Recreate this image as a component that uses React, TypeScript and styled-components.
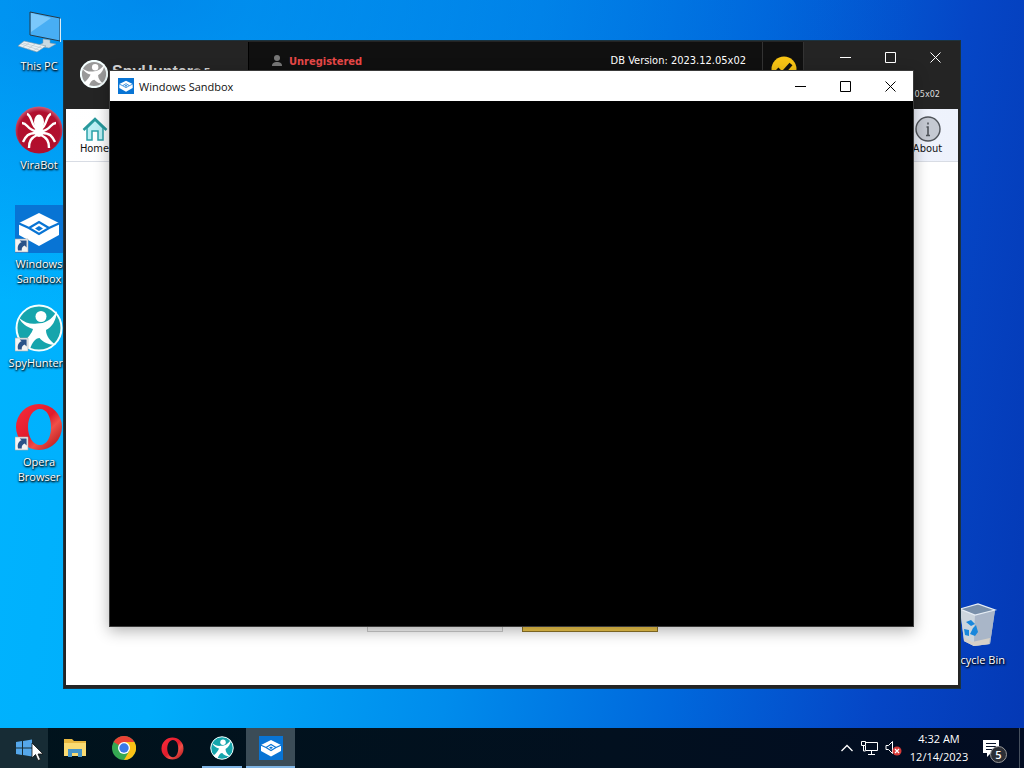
import React from "react";
import styled, { createGlobalStyle, css } from "styled-components";

const ui = `"Open Sans", "Noto Sans", sans-serif`;
const tahoma = `"DejaVu Sans Condensed", "DejaVu Sans", sans-serif`;

const Global = createGlobalStyle`
  * { box-sizing: border-box; }
  body { margin: 0; font-family: ${ui}; font-size: 11px; line-height: 15px; overflow: hidden; }
  button { font: inherit; color: inherit; border: 0; padding: 0; margin: 0; background: none; cursor: default; }
  svg { display: block; flex: none; }
  h1, h2, p { margin: 0; font: inherit; }
`;

const Desktop = styled.div`
  min-height: 100vh;
  display: flex;
  flex-direction: column;
  background:
    radial-gradient(ellipse 75% 40% at 15% 0%, rgba(0, 100, 220, 0.5), transparent),
    linear-gradient(98deg, #00b4ff 0%, #00aefb 22%, #008cec 48%, #0068dc 68%, #0546c6 86%, #0438b4 100%);
`;

const Workspace = styled.main`
  position: relative;
  flex: 1;
  padding: 7px 0;
`;

const Shortcuts = styled.nav`
  display: flex;
  flex-direction: column;
  gap: 21px;
  width: 78px;
`;

const Shortcut = styled.button`
  display: flex;
  flex-direction: column;
  align-items: center;
  gap: 3px;
  height: 78px;
  color: #fff;
  text-shadow: 1px 1px 2px #000, 0 1px 2px #000;
`;

const Label = styled.span<{ $wide?: boolean }>`
  max-width: ${(p) => (p.$wide ? "80px" : "60px")};
  text-align: center;
  white-space: ${(p) => (p.$wide ? "nowrap" : "normal")};
`;

const BinSpot = styled.div`
  position: absolute;
  right: 19px;
  bottom: 49px;
`;

const Frame = styled.section`
  position: absolute;
  left: 63px;
  right: 63px;
  top: 40px;
  bottom: 39px;
  display: flex;
  flex-direction: column;
  background: #242424;
  border: 1px solid #1b3340;
  padding: 1px 2px 3px;
`;

const FrameHeader = styled.header`
  display: flex;
  height: 67px;
  color: #fff;
  font-family: ${tahoma};
  font-size: 11px;
`;

const Brand = styled.div`
  display: flex;
  width: 182px;
  padding: 18px 0 0 14px;
  gap: 4px;
`;

const BrandName = styled.h1`
  display: flex;
  color: #d8d8d8;
  font: bold 16px/24px "Liberation Sans", sans-serif;
  white-space: nowrap;
`;

const BrandMark = styled.small`
  font-size: 11px;
`;

const StatusStrip = styled.div`
  flex: 1;
  display: flex;
  align-items: flex-start;
  justify-content: space-between;
  height: 54px;
  background: #101010;
  border-left: 1px solid #000;
  border-right: 1px solid #333;
  padding: 11px 16px 0 22px;
`;

const Unregistered = styled.span`
  display: flex;
  gap: 6px;
  color: #e84848;
  font: bold 11px/18px ${tahoma};
`;

const CheckCell = styled.div`
  width: 41px;
  height: 54px;
  padding: 14px 0 0 8px;
  background: #101010;
  border-right: 1px solid #333;
`;

const HeaderEnd = styled.div`
  display: flex;
  flex-direction: column;
  width: 154px;
`;

const Controls = styled.div<{ $dark?: boolean }>`
  display: flex;
  justify-content: flex-end;
  height: 30px;
  color: ${(p) => (p.$dark ? "#000" : "#fff")};
`;

const Control = styled.button`
  display: grid;
  place-items: center;
  width: 45px;
  height: 30px;
`;

const Version = styled.p`
  padding: 15px 18px 0 0;
  text-align: right;
  font-size: 9px;
  color: #ddd;
`;

const NavBar = styled.nav`
  display: flex;
  justify-content: space-between;
  align-items: flex-start;
  height: 53px;
  padding: 7px 9px 0 7px;
  background: linear-gradient(90deg, #fff, #eef2fc);
  border-bottom: 1px solid #d8dce4;
`;

const NavItem = styled.button`
  display: flex;
  flex-direction: column;
  align-items: center;
  width: 43px;
  color: #111;
  font: 11px/13px ${tahoma};
`;

const FrameBody = styled.div`
  flex: 1;
  display: flex;
  align-items: flex-end;
  justify-content: center;
  gap: 19px;
  padding-bottom: 53px;
  background: #fff;
`;

const Action = styled.button<{ $primary?: boolean }>`
  width: 136px;
  height: 34px;
  background: ${(p) => (p.$primary ? "#f0c84c" : "#f8f8f8")};
  border: 1px solid ${(p) => (p.$primary ? "#8f7528" : "#ccc")};
`;

const SandboxWindow = styled.section`
  position: absolute;
  left: 109px;
  right: 110px;
  top: 70px;
  bottom: 101px;
  display: flex;
  flex-direction: column;
  border: 1px solid #3a3a3a;
  background: #000;
  box-shadow: 0 4px 14px rgba(0, 0, 0, 0.3);
`;

const TitleBar = styled.header`
  display: flex;
  align-items: center;
  justify-content: space-between;
  height: 30px;
  padding-left: 8px;
  background: #fff;
`;

const Title = styled.h2`
  display: flex;
  align-items: center;
  gap: 5px;
  color: #111;
`;

const Taskbar = styled.footer`
  display: flex;
  justify-content: space-between;
  height: 40px;
  color: #fff;
  background: linear-gradient(90deg, #00131c, #02101f 60%, #020c22);
`;

const Group = styled.div`
  display: flex;
  align-items: center;
`;

const Task = styled.button<{ $state?: "open" | "active" | "hover" }>`
  display: grid;
  place-items: center;
  width: 49px;
  height: 40px;
  border: solid transparent;
  border-width: 2px 0;
  ${(p) => p.$state === "hover" && css`
    width: 48px;
    margin-right: 2px;
    background: #172c35;
  `}
  ${(p) => p.$state === "open" && css`
    background: linear-gradient(#7fb4e4, #7fb4e4) 50% 100% / 40px 2px no-repeat border-box;
  `}
  ${(p) => p.$state === "active" && css`
    background: #3b4c57;
    border-bottom-color: #7fb4e4;
  `}
`;

const Pointer = styled.span`
  position: absolute;
  left: 31px;
  bottom: 6px;
`;

const Tray = styled(Group)`
  gap: 7px;
  padding-right: 4px;
`;

const Clock = styled.time`
  width: 60px;
  text-align: center;
  line-height: 18px;
  white-space: nowrap;
`;

const Notices = styled.button`
  position: relative;
  margin: 0 5px 0 7px;
  width: 24px;
  height: 30px;
  display: flex;
  align-items: center;
`;

const Badge = styled.span`
  position: absolute;
  right: 0;
  bottom: 0;
  width: 17px;
  height: 17px;
  border: 1px solid #999;
  border-radius: 50%;
  background: #2c2f36;
  font-weight: 600;
  text-align: center;
`;

const ShowDesktop = styled.button`
  width: 1px;
  height: 40px;
  background: #46505e;
`;

function ShortcutArrow() {
  return (
    <g>
      <path d="M0 34h13v13H0z" fill="#f4f4f4" stroke="#aaa" strokeWidth=".6" />
      <path d="M3 45.500c-1-4.500 1-7.500 3.600-8.200L4.600 35.500h7v7l-2-2C7 41.500 6.500 43.500 6.800 45.500z" fill="#2a5288" />
    </g>
  );
}

function SandboxIcon({ size, arrow }: { size: number; arrow?: boolean }) {
  return (
    <svg width={size} height={size} viewBox="0 0 48 48" aria-hidden>
      <path d="M0 0h48v48H0z" fill="#0874d4" />
      <path d="M24 8 44 18v12L24 41 4 30V18z" fill="#fff" />
      <path d="M3 18l11 5 10 6 10-6 11-5M14 23l10-6 10 6" fill="none" stroke="#0874d4" strokeWidth="2.200" />
      <path d="M20 23.500l4-2.500 4 2.500-4 2.500z" fill="#0874d4" />
      {arrow && <ShortcutArrow />}
    </svg>
  );
}

function HunterIcon({ size, arrow, gray }: { size: number; arrow?: boolean; gray?: boolean }) {
  return (
    <svg width={size} height={size} viewBox="0 0 48 48" aria-hidden>
      <circle cx="24" cy="24" r="22.500" fill={gray ? "#999" : "#16a5ac"} stroke="#f4ffff" strokeWidth={gray ? 3.500 : 2} />
      <circle cx="26" cy="12.500" r="5.500" fill="#fff" />
      <path d="M4 14c6 5 12 6.500 18 5.500 8 0 14-3 20-12.500-1 10-5 16-11 19 0 6 4 11 10 15-8 0-13-3-16.500-7-4 0-7 4-9.500 11-3-1-6-3-8-6 6-5 10-10 11-14C12 23 7 20 4 14z" fill="#fff" />
      {arrow && <ShortcutArrow />}
    </svg>
  );
}

function OperaIcon({ size, arrow, id }: { size: number; arrow?: boolean; id: string }) {
  return (
    <svg width={size} height={size} viewBox="0 0 48 48" aria-hidden>
      <defs>
        <linearGradient id={id} x1="0" y1="0" x2="1" y2="1">
          <stop offset="0" stopColor="#fa2c3c" />
          <stop offset=".5" stopColor="#e01c2c" />
          <stop offset=".65" stopColor="#f05048" />
          <stop offset="1" stopColor="#a80c14" />
        </linearGradient>
      </defs>
      <path fillRule="evenodd" fill={`url(#${id})`} d="M24 1a23 23 0 1 0 0 46 23 23 0 1 0 0-46zm1 5c7 0 11 8 11 18s-4 18-11 18-12-8-12-18S18 6 25 6z" />
      {arrow && <ShortcutArrow />}
    </svg>
  );
}

function PcIcon() {
  return (
    <svg width="48" height="48" viewBox="0 0 48 48" aria-hidden>
      <path d="M15 5l30 6v23l-30-6z" fill="#48aef4" stroke="#263a48" strokeWidth="1" />
      <path d="M16 6l20 5-20 14z" fill="#7bc8fb" />
      <path d="M45 11l1 1v23h-1z" fill="#dcecf5" />
      <path d="M28 32l7 1v3l6 1-7 4-12-2 6-3z" fill="#c8d9e2" stroke="#8299a6" strokeWidth=".5" />
      <path d="M9 34l22 5-9 6-19-6z" fill="#eaf1f4" stroke="#8298a4" strokeWidth=".6" />
      <path d="M8 36l19 5M6 37l18 6M14 36l-6 4m12-3l-7 5m13-3l-8 5" stroke="#b4c3cb" strokeWidth=".6" />
    </svg>
  );
}

function SpiderIcon() {
  return (
    <svg width="48" height="48" viewBox="0 0 48 48" aria-hidden>
      <defs>
        <radialGradient id="spider" cx=".5" cy=".55" r=".55">
          <stop offset="0" stopColor="#b50c28" />
          <stop offset=".8" stopColor="#b01030" />
          <stop offset="1" stopColor="#d0607a" />
        </radialGradient>
      </defs>
      <circle cx="24" cy="24" r="23.500" fill="url(#spider)" />
      <ellipse cx="24" cy="16" rx="5" ry="7.500" fill="#fff" />
      <ellipse cx="24" cy="26" rx="4.500" ry="5" fill="#fff" />
      <path d="M22 23C16 20 17 9 12 8M26 23c6-3 5-14 10-15M21 25C12 24 13 17 7 17M27 25c9-1 8-8 14-8M21 27c-8 0-10 3-13 9M27 27c8 0 10 3 13 9M22 29c-6 3-8 6-8 13M26 29c6 3 8 6 8 13" fill="none" stroke="#fff" strokeWidth="2.400" />
    </svg>
  );
}

function BinIcon() {
  return (
    <svg width="48" height="48" viewBox="0 0 48 48" aria-hidden>
      <path d="M8 8l18-5 17 6-5 34-16 2-10-5z" fill="#b6c2ce" />
      <path d="M8 8l15 6-1 31-10-5z" fill="#cbd5dd" />
      <path d="M23 14l20-5-5 34-16 2z" fill="#a9b6c8" />
      <path d="M12 36l8 5 18-4-1 6-15 2-10-5z" fill="#d6d1c8" />
      <path d="M8 8l18-5 17 6-20 5z" fill="#7990aa" stroke="#e5edf5" strokeWidth="1.200" />
      <path d="M14 21l5-2 4 4-4 2zM21 27l3-3 2 7-3 4-5-2zM12 28l5 1v6l-4-1z" fill="#1887dc" />
    </svg>
  );
}

function WindowControls({ dark }: { dark?: boolean }) {
  const shapes: [string, string][] = [
    ["Minimize", "M0 5.500h11"],
    ["Maximize", "M.5 .5h10v10H.5z"],
    ["Close", "M.5 .5l10 10M10.500 .5l-10 10"],
  ];
  return (
    <Controls $dark={dark}>
      {shapes.map(([name, d]) => (
        <Control key={name} aria-label={name}>
          <svg width="11" height="11" viewBox="0 0 11 11" fill="none" stroke="currentColor">
            <path d={d} />
          </svg>
        </Control>
      ))}
    </Controls>
  );
}

export default function App() {
  return (
    <Desktop>
      <Global />
      <Workspace>
        <Shortcuts aria-label="Desktop">
          <Shortcut><PcIcon /><Label>This PC</Label></Shortcut>
          <Shortcut><SpiderIcon /><Label>ViraBot</Label></Shortcut>
          <Shortcut><SandboxIcon size={48} arrow /><Label>Windows Sandbox</Label></Shortcut>
          <Shortcut><HunterIcon size={48} arrow /><Label $wide>SpyHunter5</Label></Shortcut>
          <Shortcut><OperaIcon size={48} arrow id="operaLarge" /><Label>Opera Browser</Label></Shortcut>
        </Shortcuts>

        <BinSpot>
          <Shortcut><BinIcon /><Label $wide>Recycle Bin</Label></Shortcut>
        </BinSpot>

        <Frame>
          <FrameHeader>
            <Brand>
              <HunterIcon size={28} gray />
              <BrandName>SpyHunter<BrandMark>® 5</BrandMark></BrandName>
            </Brand>
            <StatusStrip>
              <Unregistered>
                <svg width="12" height="18" viewBox="0 0 12 18" fill="#777" aria-hidden>
                  <circle cx="6" cy="5" r="3" />
                  <path d="M1 13c0-3 2-4 5-4s5 1 5 4z" />
                </svg>
                Unregistered
              </Unregistered>
              <span>DB Version: 2023.12.05x02</span>
            </StatusStrip>
            <CheckCell>
              <svg width="26" height="26" viewBox="0 0 26 26" aria-hidden>
                <circle cx="13" cy="13" r="12.500" fill="#f8c414" />
                <path d="M6 13l5 5 9-10" fill="none" stroke="#111" strokeWidth="4" />
              </svg>
            </CheckCell>
            <HeaderEnd>
              <WindowControls />
              <Version>2023.12.05x02</Version>
            </HeaderEnd>
          </FrameHeader>
          <NavBar>
            <NavItem>
              <svg width="26" height="26" viewBox="0 0 26 26" aria-hidden>
                <path d="M5 12l8-8 8 8v12h-5v-9h-6v9H5z" fill="#bdf0f5" stroke="#2ba0a8" strokeWidth="1.500" />
                <path d="M1.500 14L13 3l11.500 11" fill="none" stroke="#28999c" strokeWidth="2.500" />
              </svg>
              Home
            </NavItem>
            <NavItem>
              <svg width="26" height="26" viewBox="0 0 26 26" aria-hidden>
                <circle cx="13" cy="13" r="12" fill="#c5c9d2" stroke="#50545a" strokeWidth="1.400" />
                <path d="M11.500 11H13v8.500M11 19.500h4M13 6.500v2" fill="none" stroke="#4e5359" strokeWidth="1.600" />
              </svg>
              About
            </NavItem>
          </NavBar>
          <FrameBody>
            <Action aria-label="Cancel" />
            <Action $primary aria-label="Continue" />
          </FrameBody>
        </Frame>

        <SandboxWindow>
          <TitleBar>
            <Title><SandboxIcon size={16} />Windows Sandbox</Title>
            <WindowControls dark />
          </TitleBar>
        </SandboxWindow>
      </Workspace>

      <Taskbar>
        <Group>
          <Task $state="hover" aria-label="Start">
            <svg width="18" height="18" viewBox="0 0 18 18" fill="#55a7ea" aria-hidden>
              <path d="M1 3l6-1v6.500H1zM8 2l9-1.500v8H8zM1 9.500h6V16l-6-1zM8 9.500h9v8L8 16z" />
            </svg>
          </Task>
          <Task aria-label="File Explorer">
            <svg width="22" height="20" viewBox="0 0 22 20" aria-hidden>
              <path d="M0 1h8l2 2h12v15H0z" fill="#e8b840" />
              <path d="M0 5h22v13H0z" fill="#fadb72" />
              <path d="M4 19v-8h14v8h-4v-4H8v4z" fill="#4594c8" />
            </svg>
          </Task>
          <Task aria-label="Chrome">
            <svg width="24" height="24" viewBox="0 0 24 24" aria-hidden>
              <circle cx="12" cy="12" r="12" fill="#35a852" />
              <path d="M12 12L1.600 6A12 12 0 0 1 22.400 6z" fill="#e94235" />
              <path d="M12 6h10.400A12 12 0 0 1 12 24l5.200-9z" fill="#fbc116" />
              <circle cx="12" cy="12" r="6" fill="#fff" />
              <circle cx="12" cy="12" r="4.700" fill="#3a79e8" />
            </svg>
          </Task>
          <Task aria-label="Opera"><OperaIcon size={23} id="operaSmall" /></Task>
          <Task $state="open" aria-label="SpyHunter"><HunterIcon size={24} /></Task>
          <Task $state="active" aria-label="Windows Sandbox"><SandboxIcon size={24} /></Task>
        </Group>
        <Tray>
          <svg width="14" height="16" viewBox="0 0 14 16" fill="none" stroke="#fff" strokeWidth="1.300" aria-hidden>
            <path d="M1.500 11L7 5.500l5.500 5.500" />
          </svg>
          <svg width="17" height="16" viewBox="0 0 17 16" fill="none" stroke="#fff" aria-hidden>
            <path d="M5 2.500h11.500v8H4.500V6M10.500 11v3M7 14.500h7M.5 1.500h4v4h-4zM2.500 6v5h2" />
          </svg>
          <svg width="17" height="18" viewBox="0 0 17 18" aria-hidden>
            <path d="M1 6.500h2.500l4-4v12l-4-4H1z" fill="none" stroke="#fff" />
            <circle cx="12" cy="12" r="4.500" fill="#d63a38" />
            <path d="M10 10l4 4m0-4l-4 4" stroke="#fff" strokeWidth="1.200" />
          </svg>
          <Clock dateTime="2023-12-14T04:32">4:32 AM<br />12/14/2023</Clock>
          <Notices aria-label="Notifications">
            <svg width="16" height="18" viewBox="0 0 16 18" aria-hidden>
              <path d="M0 1h16v13H8l-4 4v-4H0z" fill="#fff" />
              <path d="M3 4.500h10M3 7.500h10M3 10.500h7" stroke="#08142a" />
            </svg>
            <Badge>5</Badge>
          </Notices>
          <ShowDesktop aria-label="Show desktop" />
        </Tray>
      </Taskbar>
      <Pointer>
        <svg width="14" height="20" viewBox="0 0 14 20" aria-hidden>
          <path d="M1 1v15l3.500-3.500L7 18.500l2.500-1-2.500-5.500h5z" fill="#fff" stroke="#111" strokeWidth=".8" />
        </svg>
      </Pointer>
    </Desktop>
  );
}
